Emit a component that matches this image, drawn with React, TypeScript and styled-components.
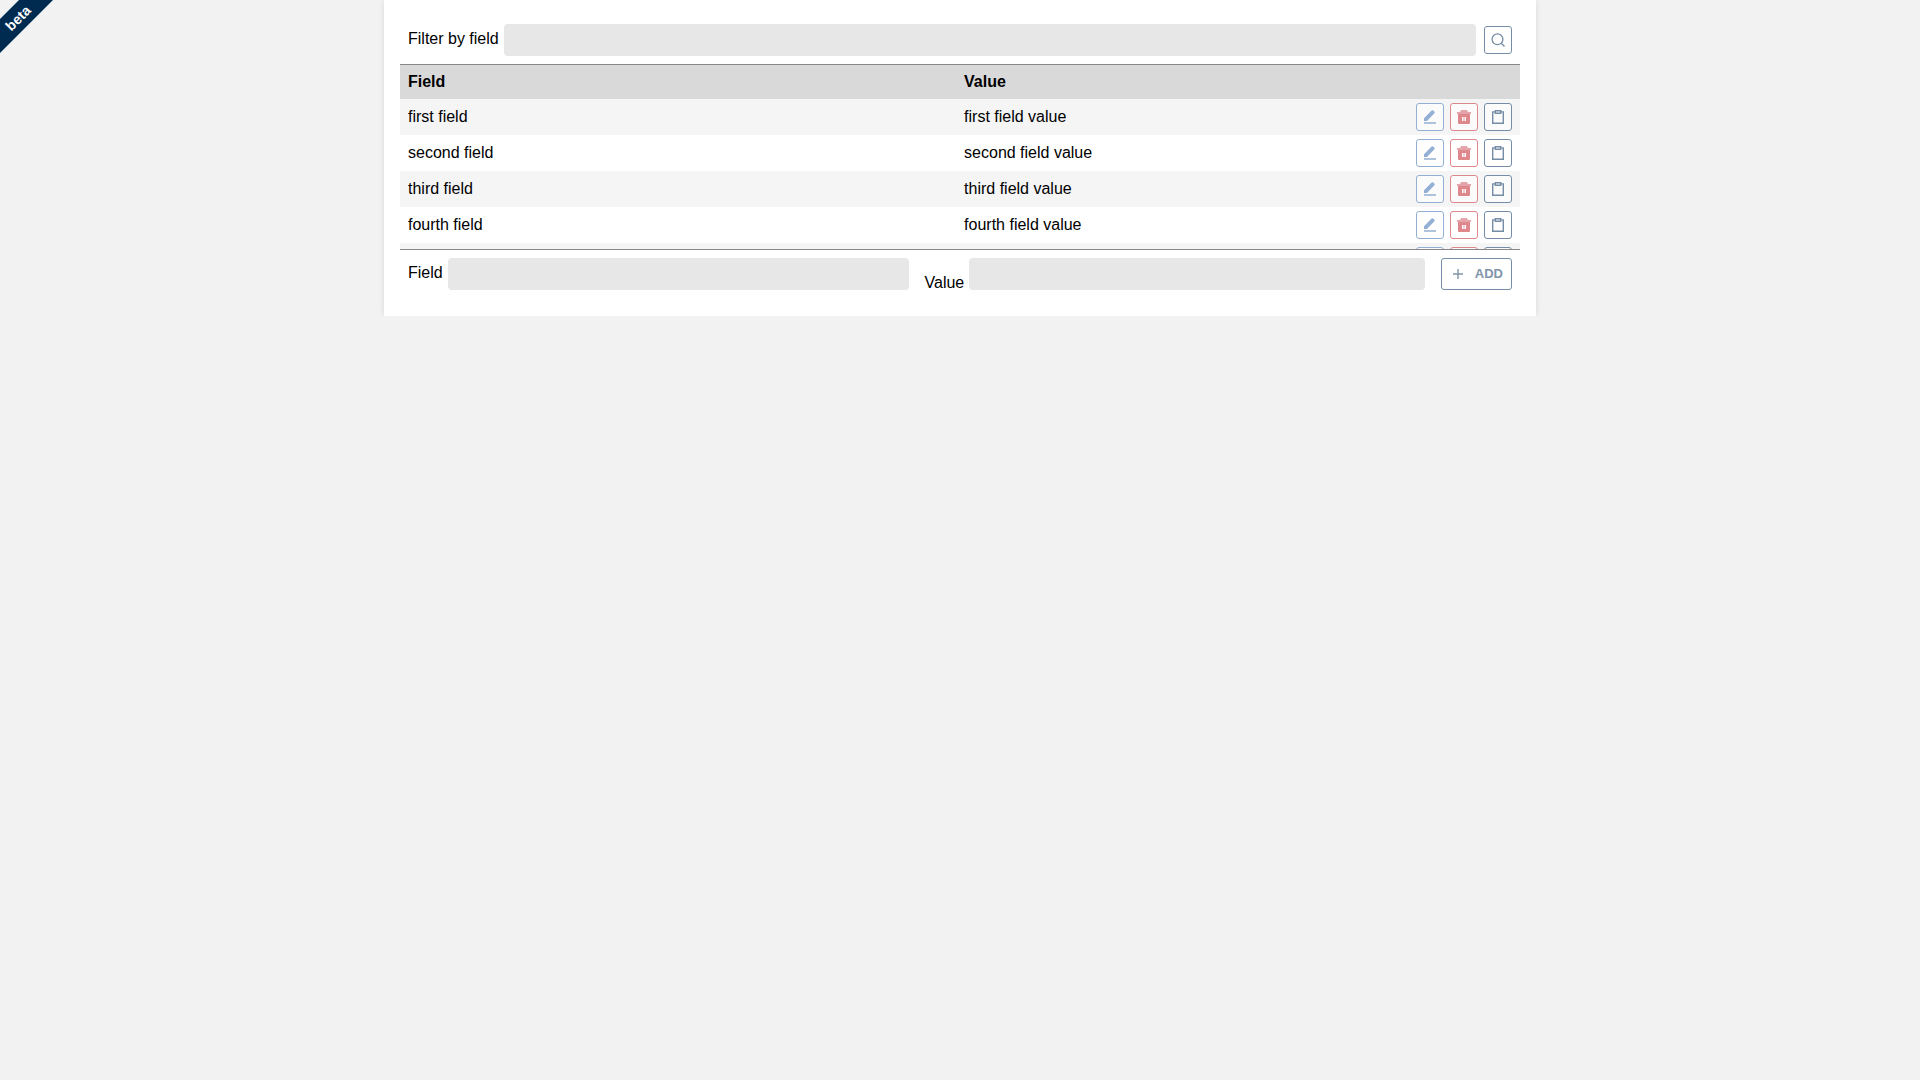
import React, { useState } from "react";
import styled, { createGlobalStyle } from "styled-components";

const GlobalStyle = createGlobalStyle`
  *, *::before, *::after { box-sizing: border-box; }
  body {
    margin: 0;
    background: #f2f2f2;
    color: #000;
    font: 16px/18px "Liberation Sans", Arial, sans-serif;
  }
`;

const Page = styled.div`
  overflow: hidden;
`;

const Ribbon = styled.div`
  position: absolute;
  top: 6px;
  left: -32px;
  width: 100px;
  height: 24px;
  background: #002b50;
  color: #fff;
  font-size: 14px;
  font-weight: bold;
  line-height: 24px;
  text-align: center;
  transform: rotate(-45deg);
`;

const Card = styled.main`
  width: 60%;
  margin: 0 auto;
  padding: 16px 16px 18px;
  background: #fff;
  box-shadow: 0 0 6px rgba(0, 0, 0, 0.1);
`;

const Bar = styled.form<{ $gap: number }>`
  display: flex;
  align-items: center;
  gap: ${(p) => p.$gap}px;
  padding: 8px;
`;

const Group = styled.div`
  display: flex;
  flex: 1;
  gap: 5px;
  min-width: 0;
`;

const Label = styled.label<{ $low?: boolean }>`
  align-self: ${(p) => (p.$low ? "flex-end" : "flex-start")};
  line-height: ${(p) => (p.$low ? 14 : 30)}px;
  white-space: nowrap;
`;

const TextInput = styled.input`
  flex: 1;
  min-width: 0;
  height: 32px;
  padding: 0 8px;
  border: 0;
  border-radius: 4px;
  background: #e7e7e7;
  font: inherit;
`;

const tones = {
  edit: "#93afd3",
  remove: "#de878d",
  plain: "#758da6",
};

const IconButton = styled.button<{ $tone: keyof typeof tones }>`
  display: grid;
  place-items: center;
  flex: none;
  width: 28px;
  height: 28px;
  padding: 0;
  border: 1px solid ${(p) => tones[p.$tone]};
  border-radius: 3px;
  background: rgba(255, 255, 255, 0.6);
  color: ${(p) => tones[p.$tone]};
  cursor: pointer;
`;

const AddButton = styled.button`
  display: flex;
  align-items: center;
  justify-content: space-between;
  flex: none;
  width: 71px;
  height: 32px;
  padding: 0 8px 0 11px;
  border: 1px solid #758da6;
  border-radius: 3px;
  background: #fff;
  color: #8094aa;
  font: bold 13px/16px "Liberation Sans", Arial, sans-serif;
  cursor: pointer;
`;

const Scroller = styled.div`
  height: 186px;
  overflow-y: auto;
  scrollbar-width: none;
  border-top: 1px solid #888;
  border-bottom: 1px solid #888;
`;

const Table = styled.table`
  width: 100%;
  table-layout: fixed;
  border-collapse: collapse;
`;

const HeadCell = styled.th<{ $width?: string }>`
  position: sticky;
  top: 0;
  width: ${(p) => p.$width ?? "auto"};
  height: 34px;
  padding: 0 8px;
  background: #d9d9d9;
  text-align: left;
`;

const Row = styled.tr`
  &:nth-child(odd) { background: #f5f5f5; }
`;

const Cell = styled.td`
  height: 36px;
  padding: 0 8px;
`;

const Actions = styled.div`
  display: flex;
  justify-content: flex-end;
  gap: 6px;
`;

const Icon = styled.svg`
  display: block;
  width: 14px;
  height: 14px;
  fill: none;
`;

const SearchIcon = () => (
  <Icon viewBox="0 0 14 14" stroke="currentColor" strokeWidth="1.3">
    <circle cx="6.5" cy="6.3" r="5.4" />
    <path d="M10.3 10.2 13.5 13.5" />
  </Icon>
);

const EditIcon = () => (
  <Icon viewBox="0 0 14 14">
    <path
      fill="currentColor"
      d="M1 8.2 8.6.6Q9.4-.2 10.2.6L11.4 1.8Q12 2.5 11.4 3.2L4 11H1Z"
    />
    <path fill="currentColor" opacity=".75" d="M1 12h12v2H1z" />
  </Icon>
);

const TrashIcon = () => (
  <Icon viewBox="0 0 14 14">
    <path fill="currentColor" opacity=".75" d="M3 2 4 0h6l1 2h3v2H0V2z" />
    <path
      fill="currentColor"
      fillRule="evenodd"
      d="M1 4h12v9q0 1-1 1H2q-1 0-1-1zM5 7v4h1.6V7zM7.4 7v4H9V7z"
    />
  </Icon>
);

const ClipboardIcon = () => (
  <Icon viewBox="0 0 14 14" stroke="currentColor" strokeWidth="1.4">
    <path d="M4 1.9H1.7v11.4h10.6V1.9H10" />
    <path d="M4.3.7h5.4v2.6H4.3z" />
  </Icon>
);

const PlusIcon = () => (
  <Icon viewBox="0 0 14 14" stroke="currentColor" strokeWidth="1.4">
    <path d="M5 2v10M0 7h10" />
  </Icon>
);

const initialRows = ["first", "second", "third", "fourth", "fifth"].map((n) => ({
  field: `${n} field`,
  value: `${n} field value`,
}));

export default function App() {
  const [rows, setRows] = useState(initialRows);
  const [filter, setFilter] = useState("");
  const [field, setField] = useState("");
  const [value, setValue] = useState("");

  const add = (e: React.FormEvent) => {
    e.preventDefault();
    if (!field) return;
    setRows([...rows, { field, value }]);
    setField("");
    setValue("");
  };

  return (
    <Page>
      <GlobalStyle />
      <Ribbon>beta</Ribbon>
      <Card>
        <Bar $gap={8} onSubmit={(e) => e.preventDefault()}>
          <Group>
            <Label htmlFor="filter">Filter by field</Label>
            <TextInput id="filter" value={filter} onChange={(e) => setFilter(e.target.value)} />
          </Group>
          <IconButton $tone="plain" aria-label="Search">
            <SearchIcon />
          </IconButton>
        </Bar>
        <Scroller>
          <Table>
            <thead>
              <tr>
                <HeadCell $width="49.65%">Field</HeadCell>
                <HeadCell>Value</HeadCell>
                <HeadCell $width="120px" aria-label="Actions" />
              </tr>
            </thead>
            <tbody>
              {rows
                .filter((r) => r.field.includes(filter))
                .map((r) => (
                  <Row key={r.field}>
                    <Cell>{r.field}</Cell>
                    <Cell>{r.value}</Cell>
                    <Cell>
                      <Actions>
                        <IconButton type="button" $tone="edit" aria-label="Edit">
                          <EditIcon />
                        </IconButton>
                        <IconButton
                          type="button"
                          $tone="remove"
                          aria-label="Delete"
                          onClick={() => setRows(rows.filter((x) => x !== r))}
                        >
                          <TrashIcon />
                        </IconButton>
                        <IconButton type="button" $tone="plain" aria-label="Copy">
                          <ClipboardIcon />
                        </IconButton>
                      </Actions>
                    </Cell>
                  </Row>
                ))}
            </tbody>
          </Table>
        </Scroller>
        <Bar $gap={16} onSubmit={add}>
          <Group>
            <Label htmlFor="field">Field</Label>
            <TextInput id="field" value={field} onChange={(e) => setField(e.target.value)} />
          </Group>
          <Group>
            <Label htmlFor="value" $low>Value</Label>
            <TextInput id="value" value={value} onChange={(e) => setValue(e.target.value)} />
          </Group>
          <AddButton>
            <PlusIcon />
            ADD
          </AddButton>
        </Bar>
      </Card>
    </Page>
  );
}
